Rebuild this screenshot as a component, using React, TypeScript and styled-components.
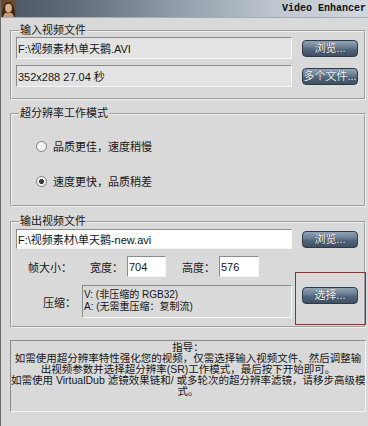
import React from 'react'
import styled, { createGlobalStyle } from 'styled-components'

const GlobalStyle = createGlobalStyle`
    html, body {
        margin: 0;
        padding: 0;
        background: #d8d8d8;
    }
    body {
        font-family: "Liberation Sans", "Noto Sans CJK SC", sans-serif;
        font-size: 11px;
        color: #161616;
    }
`

const Window = styled.div`
    position: relative;
    width: 368px;
    height: 426px;
    box-sizing: border-box;
    background: #d9d9d9;
    border-left: 1px solid #6b6b6b;
    overflow: hidden;
    display: flex;
    flex-direction: column;
`

const TitleBar = styled.div`
    height: 17px;
    flex-shrink: 0;
    display: flex;
    align-items: center;
    overflow: hidden;
    background: linear-gradient(to right, #4b5561 0%, #616c79 20%, #94a0ac 50%, #bec6ce 75%, #d2d8de 100%);
    border-bottom: 1px solid #a4acb5;
`

const TitleText = styled.span`
    margin-left: 266px;
    font-family: "Liberation Mono", monospace;
    font-weight: bold;
    font-size: 10px;
    white-space: nowrap;
    color: #0e0e0e;
`

const Body = styled.div`
    display: flex;
    flex-direction: column;
    padding: 6px 2px 0 9px;
`

const Group: any = styled.fieldset`
    margin: 0 0 0 0;
    margin-top: ${(p: any) => p.$top || 0}px;
    padding: ${(p: any) => p.$pad};
    border: 2px groove #f0f0f0;
    min-width: 0;
    display: flex;
    flex-direction: column;
    gap: ${(p: any) => p.$gap || 0}px;
`

const Legend = styled.legend`
    margin-left: 3px;
    padding: 0 1px;
    font-size: 11px;
    line-height: 13px;
`

const Row: any = styled.div`
    display: flex;
    align-items: ${(p: any) => p.$align || 'center'};
    padding-left: ${(p: any) => p.$indent || 0}px;
    margin-top: ${(p: any) => p.$top || 0}px;
`

const Field: any = styled.input`
    box-sizing: border-box;
    width: ${(p: any) => p.$w}px;
    height: ${(p: any) => p.$h}px;
    margin: 0;
    padding: 0 1px;
    border: 1px solid;
    border-color: #8c8c8c #f6f6f6 #f6f6f6 #8c8c8c;
    background: ${(p: any) => p.$bg || '#fff'};
    font-family: "Liberation Sans", "Noto Sans CJK SC", sans-serif;
    font-size: 11px;
    color: #141414;
    outline: none;
    flex-shrink: 0;
`

const SkinButton: any = styled.button`
    width: 56px;
    height: 17px;
    margin-left: 10px;
    margin-top: ${(p: any) => p.$mt || 0}px;
    padding: 0;
    flex-shrink: 0;
    border: 1px solid #2e3a47;
    border-radius: 4px;
    background: linear-gradient(#93a4b6 0%, #6a7e93 40%, #4f6378 60%, #3f5064 100%);
    color: #f4f6f8;
    font-family: "Liberation Sans", "Noto Sans CJK SC", sans-serif;
    font-size: 11px;
    line-height: 15px;
    text-shadow: 0 0 1px #1d2733;
`

const RadioRow = styled.label`
    display: flex;
    align-items: center;
    gap: 6px;
    height: 14px;
    padding-left: 20px;
    font-size: 11px;
`

const RadioDot: any = styled.span`
    width: 11px;
    height: 11px;
    box-sizing: border-box;
    border-radius: 50%;
    border: 1px solid #7c7c7c;
    background: ${(p: any) => p.$checked
        ? 'radial-gradient(circle, #3b3b3b 0 2.2px, #f4f4f4 2.9px)'
        : '#f4f4f4'};
`

const Caption: any = styled.span`
    margin-left: ${(p: any) => p.$ml || 0}px;
    margin-top: ${(p: any) => p.$mt || 0}px;
    white-space: nowrap;
    font-size: 11px;
`

const Pair: any = styled.div`
    display: flex;
    align-items: center;
    gap: 4px;
    margin-left: ${(p: any) => p.$ml || 0}px;
`

const CodecBox = styled.div`
    box-sizing: border-box;
    width: 210px;
    height: 33px;
    margin-left: 6px;
    padding: 3px 1px 0;
    border: 1px solid;
    border-color: #8c8c8c #f6f6f6 #f6f6f6 #8c8c8c;
    background: #dadada;
    font-size: 10px;
    line-height: 12px;
    white-space: nowrap;
    flex-shrink: 0;
`

const Guide = styled.div`
    margin-top: 12px;
    width: 356px;
    height: 72px;
    box-sizing: border-box;
    padding-top: 1px;
    border: 1px solid;
    border-color: #8a8a8a #f4f4f4 #f4f4f4 #8a8a8a;
    text-align: center;
    font-size: 10.5px;
    line-height: 11px;
    white-space: nowrap;
    overflow: hidden;
`

const Note = styled.div`
    position: absolute;
    left: 294px;
    top: 272px;
    width: 71px;
    height: 53px;
    box-sizing: border-box;
    border: 1px solid #a3262e;
`

const AppIcon = () => (
    <svg width="15" height="17" viewBox="0 0 15 17" style={{ flexShrink: 0 }}>
        <rect width="15" height="17" fill="#6b4a32" />
        <path d="M1 17 C1 9 3 2 7.5 2 C12 2 14 9 14 17 Z" fill="#3a2517" />
        <ellipse cx="7.5" cy="8" rx="3.4" ry="4.3" fill="#d9b08c" />
        <path d="M2 17 C3 13 5 12.5 7.5 12.5 C10 12.5 12 13 13 17 Z" fill="#c79a78" />
    </svg>
)

const App = () => (
    <>
        <GlobalStyle />
        <Window>
            <TitleBar>
                <AppIcon />
                <TitleText>Video Enhancer</TitleText>
            </TitleBar>
            <Body>
                <Group $pad="0 6px 11px 4px" $gap={6}>
                    <Legend>输入视频文件</Legend>
                    <Row>
                        <Field $w={276} $h={22} $bg="#e3e3e3" readOnly defaultValue="F:\视频素材\单天鹅.AVI" />
                        <SkinButton>浏览...</SkinButton>
                    </Row>
                    <Row>
                        <Field $w={276} $h={22} $bg="#e3e3e3" readOnly defaultValue="352x288 27.04 秒" />
                        <SkinButton>多个文件...</SkinButton>
                    </Row>
                </Group>

                <Group $top={7} $pad="19px 6px 17px 4px" $gap={21}>
                    <Legend>超分辨率工作模式</Legend>
                    <RadioRow>
                        <RadioDot />
                        品质更佳，速度稍慢
                    </RadioRow>
                    <RadioRow>
                        <RadioDot $checked />
                        速度更快，品质稍差
                    </RadioRow>
                </Group>

                <Group $top={8} $pad="1px 6px 8px 4px">
                    <Legend>输出视频文件</Legend>
                    <Row>
                        <Field $w={276} $h={20} defaultValue="F:\视频素材\单天鹅-new.avi" />
                        <SkinButton>浏览...</SkinButton>
                    </Row>
                    <Row $indent={12} $top={7}>
                        <Caption>帧大小：</Caption>
                        <Pair $ml={18}>
                            <Caption>宽度：</Caption>
                            <Field $w={39} $h={21} defaultValue="704" />
                        </Pair>
                        <Pair $ml={16}>
                            <Caption>高度：</Caption>
                            <Field $w={40} $h={21} defaultValue="576" />
                        </Pair>
                    </Row>
                    <Row $indent={27} $align="flex-start" $top={8}>
                        <Caption $mt={9}>压缩：</Caption>
                        <CodecBox>
                            V: (非压缩的 RGB32)
                            <br />
                            A: (无需重压缩：复制流)
                        </CodecBox>
                        <SkinButton $mt={2}>选择...</SkinButton>
                    </Row>
                </Group>

                <Guide>
                    指导：
                    <br />
                    如需使用超分辨率特性强化您的视频，仅需选择输入视频文件、然后调整输
                    <br />
                    出视频参数并选择超分辨率(SR)工作模式，最后按下开始即可。
                    <br />
                    如需使用 VirtualDub 滤镜效果链和/ 或多轮次的超分辨率滤镜，请移步高级模
                    <br />
                    式。
                </Guide>
            </Body>
            <Note />
        </Window>
    </>
)

export default App
